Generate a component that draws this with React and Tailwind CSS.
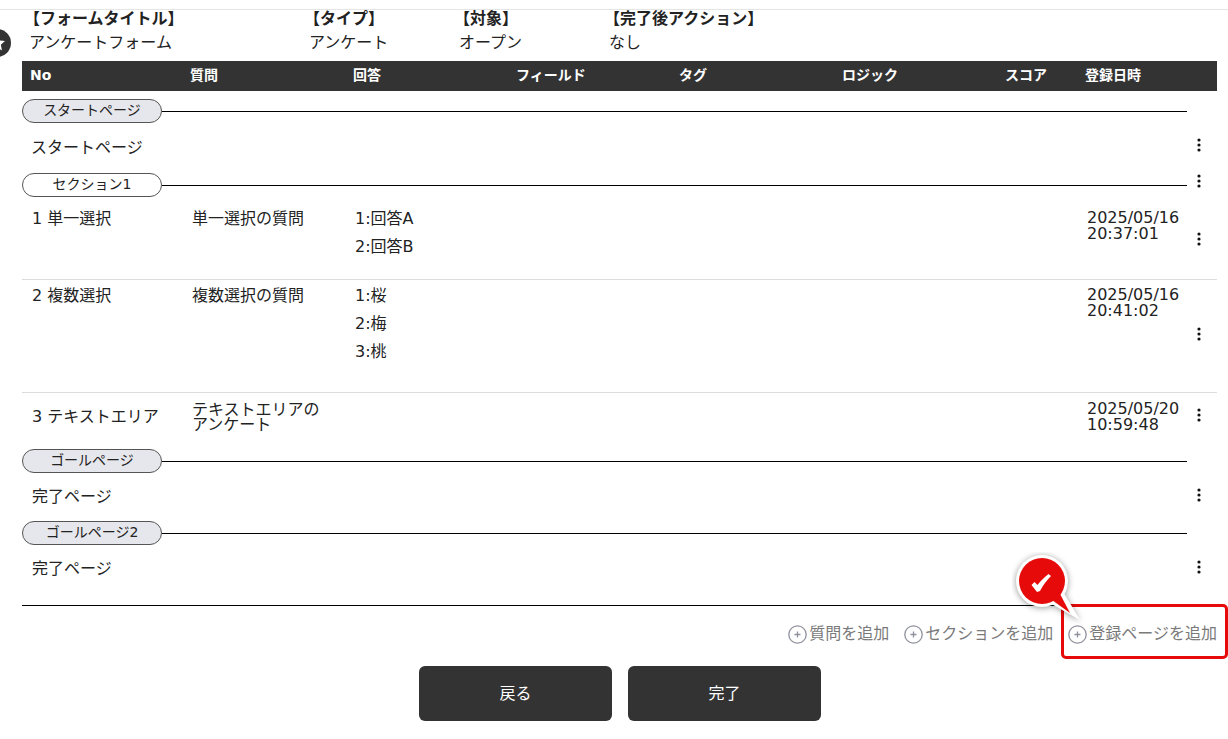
import React from 'react';

const columns = ['No', '質問', '回答', 'フィールド', 'タグ', 'ロジック', 'スコア', '登録日時'];
const rowGrid = 'grid grid-cols-[170px_163px_163px_163px_163px_163px_80px_110px]';

function Kebab({ className = '' }) {
  return (
    <svg width="4" height="14" viewBox="0 0 4 14" className={`absolute left-[1175px] ${className}`}>
      <circle cx="2" cy="2" r="1.6" fill="#111" />
      <circle cx="2" cy="7" r="1.6" fill="#111" />
      <circle cx="2" cy="12" r="1.6" fill="#111" />
    </svg>
  );
}

function SectionHeader({ label, filled, kebab }) {
  return (
    <div className="relative flex h-6 items-center">
      <div
        className={`flex h-6 w-[140px] shrink-0 items-center justify-center rounded-full border border-[#555] pb-[2px] text-[14px] leading-none text-[#222] ${
          filled ? 'bg-[#e6e7ec]' : 'bg-white'
        }`}
      >
        {label}
      </div>
      <div className="h-px w-[1025px] bg-black" />
      {kebab && <Kebab className="top-[1px]" />}
    </div>
  );
}

function PageRow({ label, height = 'h-[50px]', indent = 'pl-[10px]' }) {
  return (
    <div className={`relative flex items-center text-[16px] ${height} ${indent}`}>
      {label}
      <Kebab className="top-[15px]" />
    </div>
  );
}

function QuestionRow({ no, question, answers, date, time, height, kebabTop, border, noPad, questionPad, answerPad, datePad }) {
  return (
    <div className={`${rowGrid} relative ${height} ${border ? 'border-b border-[#ddd]' : ''}`}>
      <div className={`pl-[10px] text-[16px] leading-[24px] ${noPad}`}>{no}</div>
      <div className={`text-[16px] leading-[15px] ${questionPad}`}>
        <div className="w-[140px]">{question}</div>
      </div>
      <div className={`col-span-5 text-[16px] leading-[28px] ${answerPad}`}>
        {answers.map((a) => (
          <div key={a}>{a}</div>
        ))}
      </div>
      <div className={`col-start-8 whitespace-nowrap text-[16px] leading-[16px] ${datePad}`}>
        <div>{date}</div>
        <div>{time}</div>
      </div>
      <Kebab className={kebabTop} />
    </div>
  );
}

function AddLink({ label, className = '' }) {
  return (
    <div className={`flex items-center gap-[2px] text-[16px] text-[#7a7a7a] ${className}`}>
      <svg width="19" height="19" viewBox="0 0 19 19">
        <circle cx="9.5" cy="9.500" r="8.7" fill="none" stroke="#8f919c" strokeWidth="1.3" />
        <path d="M9.5 6.5v6M6.5 9.5h6" stroke="#8f919c" strokeWidth="1.3" />
      </svg>
      <span>{label}</span>
    </div>
  );
}

export default function App() {
  return (
    <div
      className="relative h-[739px] w-[1228px] overflow-hidden bg-white text-[#222]"
      style={{ fontFamily: '"DejaVu Sans", "Noto Sans CJK JP", sans-serif' }}
    >
      <div className="h-[10px] border-b border-[#e5e5e5]" />

      <div className="ml-[29px] flex h-[51px] text-[16px]">
        <div className="w-[280px]">
          <div className="-ml-[5px] h-[21px] font-bold leading-[18px]">【フォームタイトル】</div>
          <div className="leading-[24px]">アンケートフォーム</div>
        </div>
        <div className="w-[150px]">
          <div className="-ml-[5px] h-[21px] font-bold leading-[18px]">【タイプ】</div>
          <div className="leading-[24px]">アンケート</div>
        </div>
        <div className="w-[150px]">
          <div className="-ml-[5px] h-[21px] font-bold leading-[18px]">【対象】</div>
          <div className="leading-[24px]">オープン</div>
        </div>
        <div>
          <div className="-ml-[5px] h-[21px] font-bold leading-[18px]">【完了後アクション】</div>
          <div className="leading-[24px]">なし</div>
        </div>
      </div>

      <div className="ml-[22px] w-[1195px]">
        <div className="grid h-[30px] grid-cols-[160px_163px_163px_163px_163px_163px_80px_112px] items-center bg-[#333] pb-[2px] pl-2 text-[14px] font-bold text-white">
          {columns.map((c) => (
            <div key={c}>{c}</div>
          ))}
        </div>

        <div className="h-2" />
        <SectionHeader label="スタートページ" filled />
        <PageRow label="スタートページ" indent="pl-[9px]" />
        <SectionHeader label="セクション1" kebab />
        <QuestionRow
          no="1 単一選択"
          question="単一選択の質問"
          answers={['1:回答A', '2:回答B']}
          date="2025/05/16"
          time="20:37:01"
          height="h-[83px]"
          kebabTop="top-[35px]"
          noPad="pt-[10px]"
          questionPad="pt-[14px]"
          answerPad="pt-[8px]"
          datePad="pt-[13px]"
          border
        />
        <QuestionRow
          no="2 複数選択"
          question="複数選択の質問"
          answers={['1:桜', '2:梅', '3:桃']}
          date="2025/05/16"
          time="20:41:02"
          height="h-[113px]"
          kebabTop="top-[47px]"
          noPad="pt-[4px]"
          questionPad="pt-[8px]"
          answerPad="pt-[2px]"
          datePad="pt-[7px]"
          border
        />
        <QuestionRow
          no="3 テキストエリア"
          question="テキストエリアのアンケート"
          answers={[]}
          date="2025/05/20"
          time="10:59:48"
          height="h-[56px]"
          kebabTop="top-[15px]"
          noPad="pt-[12px]"
          questionPad="pt-[9px]"
          answerPad=""
          datePad="pt-[8px]"
        />
        <SectionHeader label="ゴールページ" filled />
        <PageRow label="完了ページ" height="h-[48px]" />
        <SectionHeader label="ゴールページ2" filled />
        <PageRow label="完了ページ" height="h-[48px]" />
        <div className="mt-[12px] h-px bg-black" />

        <div className="mt-[17px] flex h-[22px] items-center justify-end">
          <AddLink label="質問を追加" className="-translate-x-px" />
          <AddLink label="セクションを追加" className="ml-[14px]" />
          <AddLink label="登録ページを追加" className="ml-[15px]" />
        </div>
      </div>

      <div className="mt-[21px] flex justify-center gap-4 pl-[12px]">
        <button className="h-[55px] w-[193px] rounded-[6px] bg-[#333] text-[16px] text-white">戻る</button>
        <button className="h-[55px] w-[193px] rounded-[6px] bg-[#333] text-[16px] text-white">完了</button>
      </div>

      {/* overlays */}
      <div className="absolute left-[-17px] top-[29px] flex h-7 w-7 items-center justify-center rounded-full bg-[#333]">
        <svg width="18" height="18" viewBox="0 0 16 16">
          <path d="M8 1l2.100 4.600 5 .6-3.700 3.400 1 5L8 11.900l-4.400 2.700 1-5L.9 6.200l5-.6z" fill="#fff" />
        </svg>
      </div>
      <div className="absolute left-[1061px] top-[604px] h-[55px] w-[167px] rounded-[5px] border-[3px] border-[#e60a0a]" />
      <svg width="74" height="74" viewBox="0 0 74 74" className="absolute left-[1012px] top-[552px]">
        <g style={{ filter: 'drop-shadow(0 1px 3px rgba(0,0,0,.4))' }}>
          <circle cx="30" cy="29" r="26" fill="#fff" />
          <path d="M36 50L68 68L50 38z" fill="#fff" />
        </g>
        <circle cx="30" cy="29" r="23" fill="#e60a0a" />
        <path d="M40 48L58 61L47 40z" fill="#e60a0a" />
        <path d="M19.500 33l3-3 3 3c3-4 7-8 11-11l2.500 2c-4 4-8 9-11 15l-3 1z" fill="#fff" />
      </svg>
    </div>
  );
}
